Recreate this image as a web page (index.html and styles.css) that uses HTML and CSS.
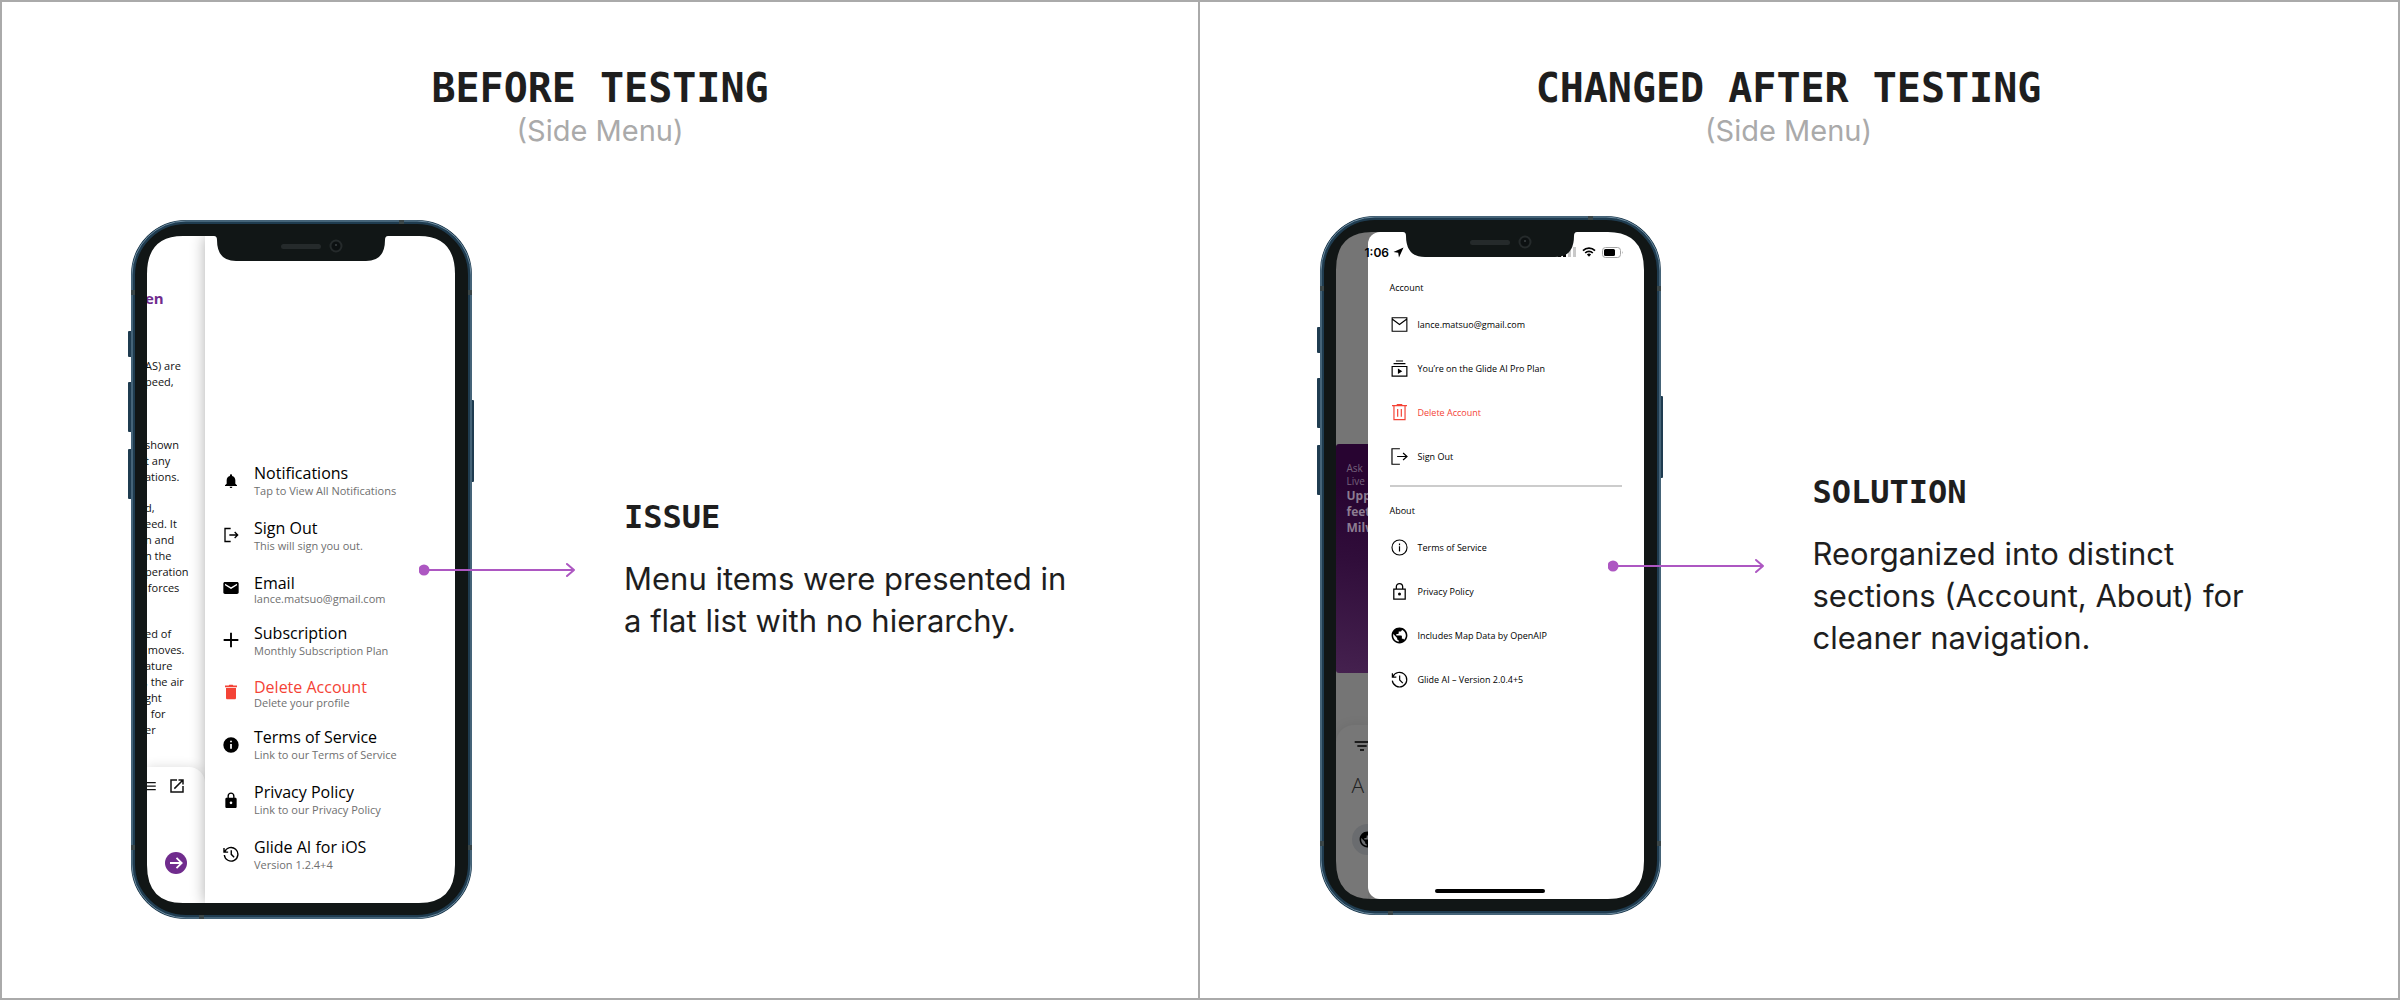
FILE: index.html
```html
<!DOCTYPE html>
<html lang="en">
<head>
<meta charset="utf-8">
<meta name="viewport" content="width=device-width, initial-scale=1">
<title>Side Menu – Before and After Testing</title>
<link rel="stylesheet" href="styles.css">
</head>
<body>
<svg class="sprite" aria-hidden="true">
  <symbol id="frame" viewBox="0 0 347 699">
    <g fill="#1f3c50">
      <rect x="0" y="111" width="6" height="26" rx="1"/>
      <rect x="0" y="162" width="6" height="50" rx="1"/>
      <rect x="0" y="229" width="6" height="50" rx="1"/>
      <rect x="341" y="180" width="5" height="82" rx="1"/>
    </g>
    <path fill="#111616" fill-rule="evenodd" d="M57 1H290A52 52 0 0 1 343 54V645A52 52 0 0 1 290 698H57A52 52 0 0 1 4 645V54A52 52 0 0 1 57 1ZM55 16Q19 16 19 54V645Q19 683 55 683H291Q327 683 327 645V54Q327 16 291 16H260Q257 16 257 20Q257 41 238 41H108Q89 41 89 20Q89 16 86 16Z"/>
    <rect x="5" y="2" width="337" height="695" rx="53" fill="none" stroke="#1f3c50" stroke-width="4"/>
    <rect x="4" y="1" width="339" height="697" rx="54" fill="none" stroke="#6d8ba0" stroke-width="1"/>
    <g fill="#3a4648">
      <rect x="3" y="70" width="4" height="5"/><rect x="340" y="70" width="4" height="5"/>
      <rect x="3" y="625" width="4" height="5"/><rect x="340" y="625" width="4" height="5"/>
      <rect x="271" y="0" width="5" height="4"/><rect x="71" y="695" width="5" height="4"/>
    </g>
    <rect x="153" y="24" width="40" height="5" rx="2.500" fill="#252a2b"/>
    <circle cx="208" cy="26" r="5.500" fill="#0c1011" stroke="#252a2b" stroke-width="2"/>
    <circle cx="208" cy="25" r="1" fill="#3b4143"/>
  </symbol>
  <symbol id="arrow" viewBox="0 0 158 16">
    <circle cx="5" cy="8" r="5.500" fill="#ad57c2"/>
    <path d="M5 8H155M148 2l7 6-7 6" fill="none" stroke="#ad57c2" stroke-width="2" stroke-linecap="round" stroke-linejoin="round"/>
  </symbol>
  <symbol id="bell" viewBox="0 0 24 24"><path d="M12 22.500c1.100 0 2-.9 2-2h-4c0 1.100.9 2 2 2zm6.500-6.500v-5.200c0-3.100-1.800-5.600-4.900-6.300V3.500c0-.9-.7-1.600-1.600-1.600s-1.600.7-1.600 1.600v1c-3.100.7-4.900 3.200-4.900 6.300V16l-2.500 2.500v1h18v-1z"/></symbol>
  <symbol id="logout" viewBox="0 0 24 24"><path d="M11.500 2.200H3V21.800h8.500M9.500 12H22M17.500 7.500L22 12l-4.500 4.500" fill="none" stroke="currentColor" stroke-width="2"/></symbol>
  <symbol id="logout-thin" viewBox="0 0 24 24"><path d="M12.500 2.200H2.500V21.800h10M9 12H21.500M16.500 7.500L21.500 12l-5 4.500" fill="none" stroke="currentColor" stroke-width="1.500"/></symbol>
  <symbol id="mail" viewBox="0 0 24 24"><path d="M21 3H3C1.500 3 .5 4 .5 5.200v13.600C.5 20 1.500 21 3 21h18c1.400 0 2.500-1 2.500-2.200V5.200C23.500 4 22.400 3 21 3zm0 5l-9 5.500L3 8V5.500L12 11l9-5.500z"/></symbol>
  <symbol id="mail-line" viewBox="0 0 24 24"><path d="M2.700 3.500h18.600v17H2.700zM2.700 5l9.300 7 9.300-7" fill="none" stroke="currentColor" stroke-width="1.400"/></symbol>
  <symbol id="plus" viewBox="0 0 24 24"><path d="M12 1v22M1 12h22" stroke="currentColor" stroke-width="2.800"/></symbol>
  <symbol id="trash" viewBox="0 0 24 24"><path d="M4.500 6h15v15c0 1.100-.9 2-2 2h-11c-1.100 0-2-.9-2-2zM3 2.200h5.500l1-1.200h5l1 1.200H21v2.600H3z"/></symbol>
  <symbol id="trash-line" viewBox="0 0 24 24"><path d="M5 4v17h14V4M2.500 3.300h19M8.500 2h7M9.700 7.500v10M14.300 7.500v10" fill="none" stroke="currentColor" stroke-width="1.500"/></symbol>
  <symbol id="info" viewBox="0 0 24 24"><path fill-rule="evenodd" d="M12 .5a11.500 11.500 0 1 0 0 23 11.500 11.500 0 0 0 0-23zm1.300 17h-2.600v-7h2.600zm0-9.500h-2.600V5.500h2.600z"/></symbol>
  <symbol id="info-line" viewBox="0 0 24 24"><circle cx="12" cy="12" r="9.500" fill="none" stroke="currentColor" stroke-width="1.400"/><path d="M12 10.500v6.500M12 7v2" stroke="currentColor" stroke-width="1.500"/></symbol>
  <symbol id="lock" viewBox="0 0 24 24"><path d="M18.500 8.500H17.300V6c0-2.900-2.400-5.200-5.300-5.200S6.700 3.100 6.700 6v2.500H5.500c-1.100 0-2 .9-2 2V22c0 1.100.9 2 2 2h13c1.100 0 2-.9 2-2V10.500c0-1.100-.9-2-2-2zM12 18.300a2 2 0 1 1 0-4 2 2 0 0 1 0 4zm3.200-9.800H8.800V6a3.200 3.200 0 0 1 6.400 0z"/></symbol>
  <symbol id="lock-line" viewBox="0 0 24 24"><path d="M4.800 9h14.400v12.500H4.800zM8 9V6a4 4 0 0 1 8 0v3" fill="none" stroke="currentColor" stroke-width="1.600"/><circle cx="12" cy="15.200" r="1.900"/></symbol>
  <symbol id="history" viewBox="0 0 24 24"><path d="M1.500 3v6.200h6.200M2.600 8.800A10.200 10.200 0 1 1 2 13.500M12.400 6.500v6l4.300 4.200" fill="none" stroke="currentColor" stroke-width="2.100"/></symbol>
  <symbol id="history-line" viewBox="0 0 24 24"><path d="M3 4v5h5M3.600 8.500A9.200 9.200 0 1 1 2.900 13.500M12.200 7v5.500l4 4" fill="none" stroke="currentColor" stroke-width="1.500"/></symbol>
  <symbol id="plan" viewBox="0 0 24 24"><path d="M2.700 9.500h18.600v12.200H2.700z" fill="none" stroke="currentColor" stroke-width="1.500"/><path d="M4.500 5.200h15v1.300h-15zM7.500 1.800h9v1.400h-9zM10 12v7l5.500-3.500z"/></symbol>
  <symbol id="globe" viewBox="0 0 24 24"><path d="M12 2C6.480 2 2 6.480 2 12s4.480 10 10 10 10-4.480 10-10S17.520 2 12 2zm-1 17.930c-3.950-.49-7-3.850-7-7.930 0-.62.080-1.210.210-1.790L9 15v1c0 1.100.9 2 2 2v1.930zm6.900-2.540c-.26-.81-1-1.390-1.900-1.390h-1v-3c0-.55-.45-1-1-1H8v-2h2c.55 0 1-.45 1-1V7h2c1.100 0 2-.9 2-2v-.41c2.930 1.190 5 4.060 5 7.410 0 2.080-.8 3.970-2.100 5.390z"/></symbol>
  <symbol id="lines" viewBox="0 0 24 24"><path d="M3 6.500h18v1.700H3zM3 11.200h18v1.700H3zM3 16h18v1.700H3z"/></symbol>
  <symbol id="open" viewBox="0 0 24 24"><path d="M19 19H5V5h7V3H3v18h18v-9h-2v7zM14 3v2h3.590l-9.830 9.830 1.410 1.410L19 6.410V10h2V3h-7z"/></symbol>
  <symbol id="filter" viewBox="0 0 24 24"><path d="M1 5h22v2.200H1zM5 11h14v2.200H5zM9 17h6v2.200H9z"/></symbol>
  <symbol id="go" viewBox="0 0 22 22"><circle cx="11" cy="11" r="11" fill="#702c8d"/><path d="M5 11h11.500M11.500 5.800l5.200 5.200-5.200 5.200" fill="none" stroke="#fff" stroke-width="1.800"/></symbol>
  <symbol id="location" viewBox="0 0 12 12"><path d="M11.500.5L.5 5.500l5.200.8.800 5.200z"/></symbol>
  <symbol id="signal" viewBox="0 0 18 12"><path d="M0 8h3v3H0zM5 6h3v5H5z"/><path d="M10 4h3v7h-3zM15 1h3v10h-3z" fill="#c9c9c9"/></symbol>
  <symbol id="wifi" viewBox="0 0 14 10"><path d="M1 3.600a8.500 8.500 0 0 1 12 0M3.200 6a5.400 5.400 0 0 1 7.600 0" fill="none" stroke="currentColor" stroke-width="1.700"/><path d="M4.900 7.600a3 3 0 0 1 4.200 0L7 9.800z"/></symbol>
  <symbol id="battery" viewBox="0 0 22 11"><rect x=".5" y=".5" width="18" height="10" rx="3" fill="none" stroke="#a5a5a5"/><rect x="2" y="2" width="11" height="7" rx="1.500"/><path d="M20 4q1.500 1.500 0 3z" fill="#a5a5a5"/></symbol>
</svg>

<main class="board">
  <section class="panel panel-before">
    <header class="panel-head">
      <h2>BEFORE TESTING</h2>
      <p>(Side Menu)</p>
    </header>
    <div class="stage">
      <div class="phone">
        <div class="screen">
          <div class="article">
            <h4>en</h4>
            <p>AS) are<br>peed,</p>
            <p class="gap-lg">shown<br>t any<br>ations.</p>
            <p class="gap-sm">d,<br>eed. It<br>n and<br>n the<br>peration<br>&nbsp;forces</p>
            <p class="gap-md">ed of<br>&nbsp;moves.<br>ature<br>, the air<br>ght<br>&nbsp; for<br>er</p>
            <div class="tray">
              <div class="tray-tools">
                <svg class="icon"><use href="#lines"/></svg>
                <svg class="icon"><use href="#open"/></svg>
              </div>
              <button class="go" type="button" aria-label="Send"><svg><use href="#go"/></svg></button>
            </div>
          </div>
          <nav class="drawer drawer-old" aria-label="Side menu">
            <ul class="menu">
              <li><a href="#"><svg class="icon"><use href="#bell"/></svg><span><b>Notifications</b><small>Tap to View All Notifications</small></span></a></li>
              <li><a href="#"><svg class="icon"><use href="#logout"/></svg><span><b>Sign Out</b><small>This will sign you out.</small></span></a></li>
              <li class="tight"><a href="#"><svg class="icon"><use href="#mail"/></svg><span><b>Email</b><small>lance.matsuo@gmail.com</small></span></a></li>
              <li><a href="#"><svg class="icon"><use href="#plus"/></svg><span><b>Subscription</b><small>Monthly Subscription Plan</small></span></a></li>
              <li class="tight danger"><a href="#"><svg class="icon"><use href="#trash"/></svg><span><b>Delete Account</b><small>Delete your profile</small></span></a></li>
              <li><a href="#"><svg class="icon"><use href="#info"/></svg><span><b>Terms of Service</b><small>Link to our Terms of Service</small></span></a></li>
              <li><a href="#"><svg class="icon"><use href="#lock"/></svg><span><b>Privacy Policy</b><small>Link to our Privacy Policy</small></span></a></li>
              <li><a href="#"><svg class="icon"><use href="#history"/></svg><span><b>Glide AI for iOS</b><small>Version 1.2.4+4</small></span></a></li>
            </ul>
          </nav>
        </div>
        <svg class="frame" aria-hidden="true"><use href="#frame"/></svg>
        <svg class="arrow" aria-hidden="true"><use href="#arrow"/></svg>
      </div>
      <div class="copy">
        <h3>ISSUE</h3>
        <p>Menu items were presented in a flat list with no hierarchy.</p>
      </div>
    </div>
  </section>

  <section class="panel panel-after">
    <header class="panel-head">
      <h2>CHANGED AFTER TESTING</h2>
      <p>(Side Menu)</p>
    </header>
    <div class="stage">
      <div class="phone">
        <div class="screen dimmed">
          <div class="home">
            <div class="card">
              <p>Ask<br>Live</p>
              <strong>Upp<br>feet<br>Milw</strong>
            </div>
            <div class="sheet">
              <svg class="sheet-filter"><use href="#filter"/></svg>
              <span class="sheet-prompt">A</span>
              <span class="chip"><svg><use href="#globe"/></svg></span>
            </div>
          </div>
          <nav class="drawer drawer-new" aria-label="Side menu">
            <h4>Account</h4>
            <ul class="links">
              <li><a href="#"><svg class="icon"><use href="#mail-line"/></svg>lance.matsuo@gmail.com</a></li>
              <li><a href="#"><svg class="icon"><use href="#plan"/></svg>You’re on the Glide AI Pro Plan</a></li>
              <li class="danger"><a href="#"><svg class="icon"><use href="#trash-line"/></svg>Delete Account</a></li>
              <li><a href="#"><svg class="icon"><use href="#logout-thin"/></svg>Sign Out</a></li>
            </ul>
            <hr>
            <h4>About</h4>
            <ul class="links">
              <li><a href="#"><svg class="icon"><use href="#info-line"/></svg>Terms of Service</a></li>
              <li><a href="#"><svg class="icon"><use href="#lock-line"/></svg>Privacy Policy</a></li>
              <li><a href="#"><svg class="icon"><use href="#globe"/></svg>Includes Map Data by OpenAIP</a></li>
              <li><a href="#"><svg class="icon"><use href="#history-line"/></svg>Glide AI – Version 2.0.4+5</a></li>
            </ul>
          </nav>
          <div class="status">
            <span>1:06</span>
            <svg class="s-location"><use href="#location"/></svg>
            <svg class="s-signal"><use href="#signal"/></svg>
            <svg class="s-wifi"><use href="#wifi"/></svg>
            <svg class="s-battery"><use href="#battery"/></svg>
          </div>
          <div class="home-bar"></div>
        </div>
        <svg class="frame" aria-hidden="true"><use href="#frame"/></svg>
        <svg class="arrow" aria-hidden="true"><use href="#arrow"/></svg>
      </div>
      <div class="copy">
        <h3>SOLUTION</h3>
        <p>Reorganized into distinct sections (Account, About) for cleaner navigation.</p>
      </div>
    </div>
  </section>
</main>
</body>
</html>
```
FILE: styles.css
```css
* { box-sizing: border-box; }

body {
  margin: 0;
  background: #fff;
  color: #1e1e1e;
  font-family: "Open Sans", "Noto Sans", sans-serif;
}

h2, h3, h4, p, ul { margin: 0; }
ul { padding: 0; list-style: none; }
a { color: inherit; text-decoration: none; }
svg { display: block; fill: currentColor; }
.sprite { display: none; }

/* Board */
.board {
  display: grid;
  grid-template-columns: 1fr 1fr;
  min-height: 100vh;
  border: 2px solid #aaa;
}

.panel { padding: 62px 0 78px; }
.panel-before { border-right: 2px solid #aaa; }
.panel-after { padding-right: 21px; }

.panel-head { text-align: center; }

.panel-head h2,
.copy h3 {
  font-family: "DejaVu Sans Mono", monospace;
  font-weight: 700;
}

.panel-head h2 { font-size: 40px; line-height: 48px; }

.panel-head p,
.copy p { font-family: Inter, sans-serif; }

.panel-head p {
  color: #aaa;
  font-size: 29px;
  line-height: 38px;
}

.stage {
  display: flex;
  justify-content: center;
  align-items: center;
  gap: 149px;
  margin-top: 70px;
}

.panel-after .stage { margin-top: 66px; }

.copy { width: 448px; }
.copy h3 { margin-bottom: 21px; font-size: 32px; line-height: 40px; }
.copy p { font-size: 31px; line-height: 42px; }

/* Phone */
.phone {
  position: relative;
  flex: none;
  width: 347px;
  height: 699px;
  padding: 16px 20px 16px 19px;
}

.frame {
  position: absolute;
  inset: 0;
  width: 100%;
  height: 100%;
  pointer-events: none;
}

.arrow {
  position: absolute;
  top: 342px;
  left: 291px;
  width: 158px;
  height: 16px;
}

.screen {
  position: relative;
  display: flex;
  height: 100%;
  overflow: hidden;
  border-radius: 30px;
  background: #fff;
}

.drawer {
  position: relative;
  flex: 1;
  background: #fff;
  color: #000;
}

.icon { flex: none; width: 18px; height: 18px; }

/* Article behind the old menu */
.article {
  display: flex;
  flex-direction: column;
  width: 58px;
  padding-top: 52px;
  color: #111;
  font-size: 11px;
  line-height: 16px;
  white-space: nowrap;
}

.article h4,
.article p { margin-left: -2px; }

.article h4 {
  margin-bottom: 50px;
  color: #702c8d;
  font-size: 15px;
  line-height: 20px;
}

.article .gap-lg { margin-top: 47px; }
.article .gap-sm { margin-top: 15px; }
.article .gap-md { margin-top: 30px; }

.tray {
  display: flex;
  flex: 1;
  flex-direction: column;
  gap: 57px;
  margin-top: 29px;
  padding-top: 10px;
  border-radius: 0 16px 0 0;
  background: #fff;
  box-shadow: 0 0 12px rgba(0, 0, 0, .14);
}

.tray-tools { display: flex; gap: 10px; margin-left: -7px; }

.go {
  width: 22px;
  height: 22px;
  margin-left: 18px;
  padding: 0;
  border: 0;
  background: none;
}

.go svg { width: 22px; height: 22px; }

/* Old menu */
.drawer-old {
  padding: 227px 18px 31px;
  box-shadow: 0 0 14px rgba(0, 0, 0, .32);
}

.menu {
  display: flex;
  flex-direction: column;
  justify-content: space-between;
  height: 100%;
}

.menu a { display: flex; align-items: center; gap: 15px; white-space: nowrap; }
.menu .icon { width: 16px; height: 16px; }
.menu b { display: block; font-size: 16px; font-weight: 400; line-height: 21px; }
.menu small { display: block; color: #6f6f6f; font-size: 11px; line-height: 14px; }
.menu .tight small { line-height: 9px; }
.danger .icon, .danger b { color: #f44336; }

/* New menu */
.dimmed { background: #757575; }

.home {
  display: flex;
  flex-direction: column;
  width: 32px;
  padding-top: 212px;
  white-space: nowrap;
}

.card {
  height: 229px;
  padding: 18px 0 0 11px;
  border-radius: 3px 0 0 3px;
  background: linear-gradient(190deg, #280431 20%, #300d3a 50%, #45214f);
  color: #8c7c91;
}

.card p { color: #75627b; font-size: 10px; line-height: 13px; }
.card strong { display: block; font-size: 12px; line-height: 16px; }

.sheet {
  flex: 1;
  margin-top: 52px;
  padding: 13px 0 0 16px;
  border-radius: 18px 0 0 0;
  background: #777;
  color: #000;
  box-shadow: 0 0 12px rgba(0, 0, 0, .08);
}

.sheet-filter { width: 16px; height: 16px; margin-left: 2px; }

.sheet-prompt {
  display: block;
  margin: 17px 0 25px;
  color: #222;
  font-size: 21px;
  font-weight: 300;
  line-height: 28px;
}

.chip {
  display: grid;
  place-items: center;
  width: 31px;
  height: 31px;
  border-radius: 50%;
  background: #6a6c6f;
}

.chip svg { width: 19px; height: 19px; }

.drawer-new {
  padding: 50px 22px 0;
  border-radius: 12px 0 0 12px;
  font-size: 9px;
  font-weight: 500;
}

.drawer-new h4 { margin-bottom: 8px; font-size: 9px; font-weight: 500; line-height: 12px; }

.drawer-new hr {
  height: 2px;
  margin: 7px 0 18px;
  border: 0;
  background: #ccc;
}

.links a {
  display: flex;
  align-items: center;
  gap: 9px;
  height: 44px;
  white-space: nowrap;
}

.links .icon { width: 19px; height: 19px; }
.links .danger { color: #f44336; }

/* iOS chrome over the screen */
.status {
  position: absolute;
  top: 12px;
  left: 0;
  display: flex;
  align-items: center;
  width: 100%;
  height: 16px;
  padding: 0 20px 0 29px;
  color: #000;
  font-family: Inter, sans-serif;
  font-size: 12px;
  font-weight: 600;
}

.s-location { width: 11px; height: 11px; margin-left: 4px; }
.s-signal { width: 18px; height: 12px; margin-left: auto; }
.s-wifi { width: 14px; height: 10px; margin: 0 6px; }
.s-battery { width: 22px; height: 11px; }

.home-bar {
  position: absolute;
  bottom: 6px;
  left: 50%;
  width: 110px;
  height: 4px;
  margin-left: -55px;
  border-radius: 2px;
  background: #000;
}
```
